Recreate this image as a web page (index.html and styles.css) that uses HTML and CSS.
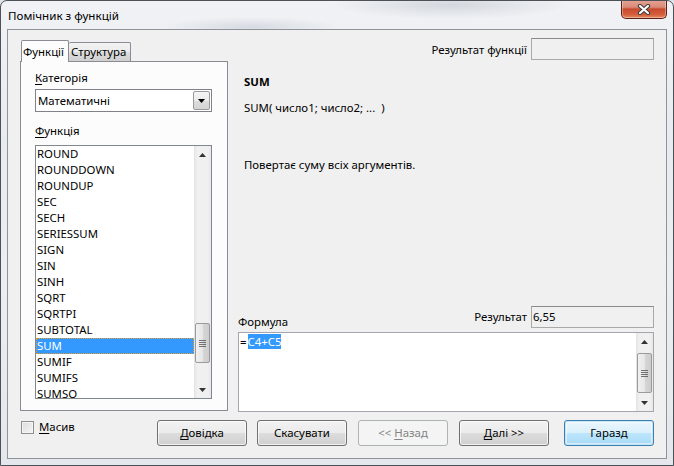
FILE: index.html
```html
<!DOCTYPE html>
<html lang="uk">
<head>
<meta charset="utf-8">
<title>Помічник з функцій</title>
<link rel="stylesheet" href="styles.css">
</head>
<body>
<div class="window">
  <div class="titlebar">
    <span class="title">Помічник з функцій</span>
    <div class="close">
      <svg width="14" height="11" viewBox="0 0 14 11">
        <path d="M3 2 L11 9 M11 2 L3 9" stroke="#3b3b3b" stroke-width="4.2" stroke-linecap="round" fill="none"/>
        <path d="M3 2 L11 9 M11 2 L3 9" stroke="#ffffff" stroke-width="2.2" stroke-linecap="round" fill="none"/>
      </svg>
    </div>
  </div>
  <div class="client">
    <div class="main">
      <div class="left">
        <div class="tabs">
          <div class="tab active">Функції</div>
          <div class="tab">Структура</div>
        </div>
        <div class="panel">
          <div class="label"><u>К</u>атегорія</div>
          <div class="combo">
            <span class="combo-text">Математичні</span>
            <span class="combo-btn">
              <svg width="7" height="4" viewBox="0 0 7 4"><path d="M0 0 H7 L3.5 4 Z" fill="#000"/></svg>
            </span>
          </div>
          <div class="label label-func"><u>Ф</u>ункція</div>
          <div class="listbox">
            <div class="items">
              <div class="item">ROUND</div>
              <div class="item">ROUNDDOWN</div>
              <div class="item">ROUNDUP</div>
              <div class="item">SEC</div>
              <div class="item">SECH</div>
              <div class="item">SERIESSUM</div>
              <div class="item">SIGN</div>
              <div class="item">SIN</div>
              <div class="item">SINH</div>
              <div class="item">SQRT</div>
              <div class="item">SQRTPI</div>
              <div class="item">SUBTOTAL</div>
              <div class="item selected">SUM</div>
              <div class="item">SUMIF</div>
              <div class="item">SUMIFS</div>
              <div class="item">SUMSQ</div>
            </div>
            <div class="vscroll">
              <div class="arrow"><svg width="7" height="4" viewBox="0 0 7 4"><path d="M0 4 H7 L3.5 0 Z" fill="#333"/></svg></div>
              <div class="track track-list"><div class="thumb"><span class="grip"></span></div></div>
              <div class="arrow"><svg width="7" height="4" viewBox="0 0 7 4"><path d="M0 0 H7 L3.5 4 Z" fill="#333"/></svg></div>
            </div>
          </div>
        </div>
      </div>
      <div class="right">
        <div class="result-row">
          <span class="rlabel">Результат функції</span>
          <div class="field"></div>
        </div>
        <div class="desc">
          <div class="fname">SUM</div>
          <div class="sig">SUM( число1; число2; ...&nbsp; )</div>
          <div class="text">Повертає суму всіх аргументів.</div>
        </div>
        <div class="formula-row">
          <span class="formula-label">Формула</span>
          <div class="res">
            <span class="rlabel">Результат</span>
            <div class="field">6,55</div>
          </div>
        </div>
        <div class="formula-box">
          <div class="formula-text">=<span class="sel">C4+C5</span></div>
          <div class="vscroll">
            <div class="arrow"><svg width="7" height="4" viewBox="0 0 7 4"><path d="M0 4 H7 L3.5 0 Z" fill="#333"/></svg></div>
            <div class="track track-formula"><div class="thumb"><span class="grip"></span></div></div>
            <div class="arrow"><svg width="7" height="4" viewBox="0 0 7 4"><path d="M0 0 H7 L3.5 4 Z" fill="#333"/></svg></div>
          </div>
        </div>
      </div>
    </div>
    <div class="bottom">
      <div class="check"><span class="box"></span><span><u>М</u>асив</span></div>
      <div class="buttons">
        <div class="btn btn-help"><span><u>Д</u>овідка</span></div>
        <div class="btn btn-cancel"><span>Скасувати</span></div>
        <div class="btn btn-back disabled"><span>&lt;&lt; <u>Н</u>азад</span></div>
        <div class="btn btn-next"><span><u>Д</u>алі &gt;&gt;</span></div>
        <div class="btn btn-ok default"><span>Гаразд</span></div>
      </div>
    </div>
  </div>
</div>
</body>
</html>
```
FILE: styles.css
```css
* { box-sizing: border-box; }
html, body { margin: 0; padding: 0; }
body {
  width: 674px;
  height: 466px;
  overflow: hidden;
  background: #dfe4ea;
  font-family: "Noto Sans", "Open Sans", sans-serif;
  font-size: 11.4px;
  color: #000;
}
u { text-decoration: underline; text-underline-offset: 2px; }

.window {
  width: 674px;
  height: 466px;
  border: 1px solid #4d5258;
  border-radius: 7px 7px 0 0;
  background: linear-gradient(180deg, #f0f2f5 0%, #e8ebef 30%, #eceef1 60%, #e4e7eb 100%);
  display: flex;
  flex-direction: column;
  overflow: hidden;
}

.titlebar {
  height: 28px;
  flex: none;
  display: flex;
  align-items: flex-start;
  justify-content: space-between;
  background:
    radial-gradient(ellipse 120px 14px at 450px 4px, rgba(170,178,188,0.4), rgba(170,178,188,0) 100%),
    radial-gradient(ellipse 90px 10px at 250px 26px, rgba(160,170,184,0.3), rgba(160,170,184,0) 100%);
}
.title {
  margin: 7px 0 0 7px;
  line-height: 16px;
  font-size: 11.6px;
  color: #000;
}
.close {
  width: 46px;
  height: 19px;
  margin: -1px 6px 0 0;
  border: 1px solid #5b2118;
  border-top: none;
  border-radius: 0 0 5px 5px;
  background: linear-gradient(180deg, #e7a395 0%, #d98a77 40%, #c74a2e 50%, #d45d3a 80%, #e48a5c 100%);
  box-shadow: inset 0 0 0 1px rgba(255,255,255,0.35);
  display: flex;
  align-items: center;
  justify-content: center;
}

.client {
  margin: 0 6px 6px 6px;
  height: 430px;
  border: 1px solid #8d9399;
  background: #f0f0f0;
  padding: 8px 12px 12px 12px;
  display: flex;
  flex-direction: column;
}

.main {
  height: 374px;
  display: flex;
  gap: 10px;
}

/* left column */
.left { width: 208px; display: flex; flex-direction: column; }
.tabs { height: 23px; display: flex; align-items: flex-end; padding-left: 1px; position: relative; z-index: 1; }
.tab {
  height: 19px;
  line-height: 17px;
  border: 1px solid #898c95;
  border-bottom: none;
  border-radius: 2px 2px 0 0;
  background: linear-gradient(180deg, #f3f3f3 0%, #ebebeb 50%, #dddddd 51%, #cfcfcf 100%);
  padding: 0 3px 0 2px;
}
.tab.active {
  height: 22px;
  margin-bottom: -1px;
  background: #fcfcfc;
  padding: 2px 3px 0 1px;
  width: 48px;
}
.tab + .tab { border-left: none; width: 62px; }
.panel {
  height: 350px;
  border: 1px solid #898c95;
  background: #fcfcfc;
  padding: 8px 0 0 14px;
}
.label { line-height: 16px; }
.label-func { margin-top: 11px; }
.combo {
  margin-top: 3px;
  width: 177px;
  height: 23px;
  border: 1px solid #7f8389;
  background: #fff;
  display: flex;
  align-items: center;
  justify-content: space-between;
}
.combo-text { padding-left: 2px; }
.combo-btn {
  width: 17px;
  height: 19px;
  margin-right: 1px;
  border: 1px solid #9a9a9a;
  border-radius: 2px;
  background: linear-gradient(180deg, #f4f4f4 0%, #ececec 50%, #dddddd 51%, #d4d4d4 100%);
  display: flex;
  align-items: center;
  justify-content: center;
}
.listbox {
  margin-top: 6px;
  width: 177px;
  height: 254px;
  border: 1px solid #82878f;
  background: #fff;
  display: flex;
}
.items { flex: 1; overflow: hidden; }
.item { height: 16px; line-height: 16px; padding-left: 1px; white-space: nowrap; }
.item.selected {
  background: #3399ff;
  color: #fff;
  outline: 1px dotted #e99a2b;
  outline-offset: -1px;
}

.vscroll {
  width: 17px;
  flex: none;
  background: linear-gradient(90deg, #e3e3e3 0%, #f0f0f0 20%, #f0f0f0 80%, #e8e8e8 100%);
  display: flex;
  flex-direction: column;
}
.arrow { height: 17px; display: flex; align-items: center; justify-content: center; flex: none; }
.track { flex: 1; }
.thumb {
  height: 40px;
  margin: 0 1px;
  border: 1px solid #9a9a9a;
  border-radius: 2px;
  background: linear-gradient(90deg, #f1f1f1 0%, #e6e6e6 50%, #d6d6d6 51%, #cdcdcd 100%);
  display: flex;
  align-items: center;
  justify-content: center;
}
.grip {
  width: 7px;
  height: 7px;
  background: repeating-linear-gradient(180deg, #555 0px, #555 1px, transparent 1px, transparent 2px);
  opacity: 0.8;
}
.track-list .thumb { margin-top: 160px; }
.track-formula .thumb { margin-top: 3px; }

/* right column */
.right { width: 416px; display: flex; flex-direction: column; }
.result-row { height: 22px; display: flex; justify-content: flex-end; align-items: center; gap: 4px; }
.field {
  width: 123px;
  height: 22px;
  border: 1px solid #a9a9a9;
  border-top-color: #8a8a8a;
  background: #f0f0f0;
  line-height: 19px;
  padding-left: 1px;
}
.desc { padding-left: 6px; flex: 1; }
.fname { margin-top: 14px; line-height: 16px; font-weight: bold; }
.sig { margin-top: 10px; line-height: 16px; }
.text { margin-top: 41px; line-height: 16px; }
.formula-row { height: 22px; display: flex; justify-content: space-between; align-items: flex-end; }
.formula-label { line-height: 16px; margin-bottom: -2px; }
.res { display: flex; align-items: center; gap: 4px; }
.res .rlabel { margin-top: -2px; }
.formula-box {
  margin-top: 4px;
  height: 80px;
  border: 1px solid #a3a6ad;
  background: #fff;
  display: flex;
}
.formula-text { flex: 1; padding: 1px 0 0 1px; line-height: 15px; }
.sel { background: #3399ff; color: #fff; margin-left: 1px; }

/* bottom row */
.bottom { margin-top: 8px; height: 26px; display: flex; justify-content: space-between; align-items: flex-start; }
.check { display: flex; align-items: center; gap: 5px; margin-left: 1px; line-height: 14px; }
.box {
  width: 13px;
  height: 13px;
  border: 1px solid #8e8f8f;
  background: linear-gradient(135deg, #dcdcdc 0%, #f5f5f5 100%);
  box-shadow: inset 0 0 0 1px #f4f4f4;
}
.buttons { display: flex; }
.btn {
  width: 90px;
  height: 26px;
  border: 1px solid #707070;
  border-radius: 3px;
  background: linear-gradient(180deg, #f2f2f2 0%, #ebebeb 49%, #dddddd 50%, #cfcfcf 100%);
  box-shadow: inset 0 0 0 1px rgba(255,255,255,0.7);
  display: flex;
  align-items: center;
  justify-content: center;
  line-height: 16px;
}
.btn-cancel { margin-left: 10px; }
.btn-back { margin-left: 11px; }
.btn-next { margin-left: 11px; }
.btn-ok { margin-left: 15px; }
.btn.disabled {
  border-color: #adb2b5;
  background: #f4f4f4;
  box-shadow: none;
  color: #838383;
}
.btn.default {
  border-color: #3c7fb1;
  box-shadow: inset 0 0 0 1px #c2e4f6, inset 0 0 0 2px rgba(255,255,255,0.5);
  background: linear-gradient(180deg, #eaf6fd 0%, #d9f0fc 49%, #bee6fd 50%, #a7d9f5 100%);
}
```
